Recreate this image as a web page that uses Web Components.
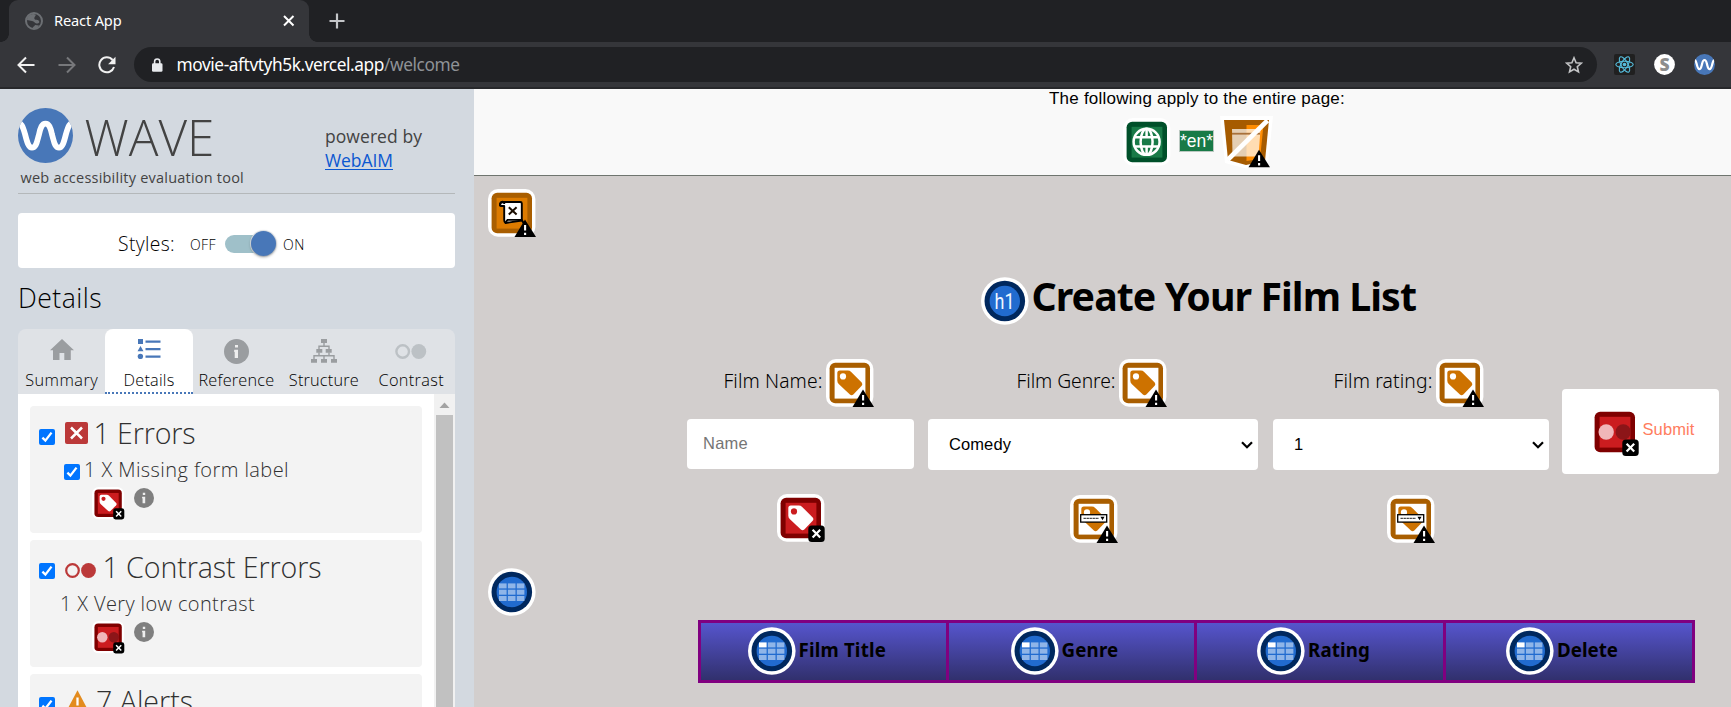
<!DOCTYPE html>
<html lang="en">
<head>
<meta charset="utf-8">
<title>React App</title>
<style>
html,body{margin:0;height:100%;overflow:hidden}
body{font-family:"Open Sans","Noto Sans",sans-serif;color:#000}
</style>
</head>
<body>
<app-window></app-window>
<script>
const define = (name, html, setup) => customElements.define(name, class extends HTMLElement {
  connectedCallback() {
    if (this.shadowRoot) return;
    const t = document.createElement('template');
    t.innerHTML = typeof html === 'function' ? html(this) : html;
    this.attachShadow({mode: 'open'}).append(t.content.cloneNode(true));
    if (setup) setup(this);
  }
});

/* A single line of text tracked out to a set width */
define('fit-text', el => `<style>
:host{display:block;flex:none;width:${el.getAttribute('w')}px;white-space:pre;font-size:${el.getAttribute('s')}px;line-height:${el.getAttribute('h') || 24}px;height:${el.getAttribute('h') || 24}px}
span{display:inline-block}
</style><span><slot></slot></span>`, el => {
  const span = el.shadowRoot.querySelector('span');
  const n = el.textContent.length;
  const d = (el.getAttribute('w') - span.getBoundingClientRect().width) / n;
  span.style.letterSpacing = d.toFixed(3) + 'px';
});

/* WAVE icons */
const alertBadge = '<path d="M37 30.5L48 48H26.5z" fill="#000"/><path d="M37.1 36v5.6M37.1 43.8v2.3" stroke="#fff" stroke-width="2.1"/>';
const xBadge = '<rect x="31.3" y="31.5" width="16.4" height="16.4" rx="3.5"/><path d="M35.6 35.8l7.6 7.8M43.2 35.8l-7.6 7.8" stroke="#fff" stroke-width="2.2"/>';
const square = (edge, fill) => `<rect width="47.4" height="47.8" rx="10" fill="#fff"/><rect x="3.6" y="3.8" width="40.4" height="40.4" rx="5.5" fill="${edge}"/><rect x="8.6" y="8.8" width="30.8" height="30.8" fill="${fill}"/>`;
const tag = (f, hole) => `<path d="M11.3 14q0-2.5 2.5-2.5h8q2 0 3.4 1.4l10.5 10.7q1.3 1.8 0 3.2l-8.4 8.7q-1.7 1.4-3.4 0L12.7 25q-1.4-1.4-1.4-3.2z" fill="${f}"/><circle cx="17" cy="17.4" r="3.1" fill="${hole}"/>`;
const round = '<circle cx="23.8" cy="24" r="23.8" fill="#fff"/><circle cx="23.8" cy="24" r="20.3" fill="#00285e"/><circle cx="23.8" cy="24" r="15.2" fill="#216bcf"/>';
const cells = first => [0,1,2].map(r => [0,1,2].map(c => `<rect x="${11+c*8.9}" y="${15.4+r*6.3}" width="7.6" height="5" fill="${first&&!r&&!c?'#fff':'#8fb5e8'}"/>`).join('')).join('');
const dots = '<circle cx="15.2" cy="24" r="7.7" fill="#f0b6b9"/><circle cx="32.2" cy="24" r="7.7" fill="#8c1518"/>';
const ART = {
  alertLabel: square('#a95e00','#fff') + tag('#cd7200','#fff') + alertBadge,
  selectLabel: square('#a95e00','#fff') + tag('#cd7200','#fff') + '<rect x="10.7" y="19.7" width="26" height="7.4" fill="#fff" stroke="#000" stroke-width="1.3"/><path d="M13.5 23.4h15.5" stroke="#444" stroke-width="1.3" stroke-dasharray="2.4 .6"/><path d="M30.5 21.7h4l-2 3.6z"/>' + alertBadge,
  errorLabel: square('#7f0000','#cb1c1f') + tag('#fff','#cb1c1f') + xBadge,
  contrast: square('#7f0000','#cb1c1f') + dots + xBadge,
  script: square('#a95e00','#dd7b00') + '<path d="M16.5 13h15.8q1.5 0 1.5 1.5V31.5L17.5 34q-1.3-1-1.3-3V17h-3.6q-1.5-4 3.9-4z" fill="#fff" stroke="#000" stroke-width="1.9" stroke-linejoin="round"/><path d="M12 17.2v-2.6q.4-1.8 2.4-1.8 1.9.2 1.9 2.2M17.5 33.5l2-2.6h14.3l3.5 6" fill="none" stroke="#000" stroke-width="1.9"/><path d="M20.8 18.2l7.8 7.4M28.6 18.2l-7.8 7.4" stroke="#1b0d00" stroke-width="2"/>' + alertBadge,
  lang: square('#00502a','#187a47') + '<g fill="none" stroke="#fff" stroke-width="2.5"><circle cx="23.6" cy="23.8" r="13"/><ellipse cx="23.6" cy="23.8" rx="6" ry="13"/><path d="M23.6 11v7.5M12 19.2h23.2M12 28.4h23.2M23.6 28.4v8"/></g>',
  h1: round + '<text x="23.6" y="31.8" text-anchor="middle" font-family="Roboto" font-weight="400" font-size="22" textLength="20" lengthAdjust="spacingAndGlyphs" fill="#eef6ff">h1</text>',
  table: round + cells(false),
  th: round + cells(true),
  style: '<path d="M0 0h53l-5 48-22 4.5L5 47z" fill="#fff"/><path d="M4 4h45l-4 41-19 4-18-5z" fill="#a65b00"/><path d="M26.500 9h17L40 43l-13.500 2z" fill="#ff8c00"/><path d="M12 13h28.500l-2 27.500H12.500z" fill="#fff" opacity=".7"/><path d="M12 17.700h28" stroke="#a8713a" stroke-width="1.800"/><path d="M47.500 4.500L7.500 44" stroke="#fff" stroke-width="4.600"/><g transform="translate(2 3.300)">' + alertBadge + '</g>'
};
define('wave-icon', el => {
  const s = el.getAttribute('size') || 48, big = el.getAttribute('kind') === 'style';
  return `<style>:host{display:block;flex:none;width:${big?53:s}px;height:${big?53:s}px}svg{display:block}</style><svg width="${big?53:s}" height="${big?53:s}" viewBox="0 0 ${big?'53 53':'48 48'}">${ART[el.getAttribute('kind')]}</svg>`;
});
define('wave-mark', el => `<style>:host{display:block;flex:none;width:${el.getAttribute('size')}px;height:${el.getAttribute('size')}px}svg{display:block}</style>
<svg width="100%" height="100%" viewBox="0 0 55 55"><defs><clipPath id="c"><circle cx="27.500" cy="27.500" r="27.500"/></clipPath></defs><circle cx="27.500" cy="27.500" r="27.500" fill="#4877b8"/><path clip-path="url(#c)" d="M-1 16C3 13 5 19 7 26C9 34 10.500 39.700 14 39.700C18.500 39.700 19 33 21 26.500C22.500 19.500 24 15.700 27.500 15.700C31 15.700 32.500 19.500 34 26.500C36 33 36.500 39.700 41 39.700C44.500 39.700 46 34 48 26C50 19 52 13 56 16" fill="none" stroke="#fff" stroke-width="5.800"/></svg>`);

define('check-box', `<style>:host{display:block;flex:none;width:16px;height:16px}svg{display:block}</style><svg width="16" height="16"><rect width="16" height="16" rx="2" fill="#0075ff"/><path d="M3.400 8.600l3 3 6.100-8" fill="none" stroke="#fff" stroke-width="2.300"/></svg>`);
define('info-dot', el => `<style>:host{display:block;flex:none}svg{display:block}</style><svg width="${el.getAttribute('size')}" height="${el.getAttribute('size')}" viewBox="0 0 25 25"><circle cx="12.500" cy="12.500" r="12.500" fill="${el.getAttribute('fill')}"/><path d="M11 6h3v2.600h-3zM10.300 10.800H14V19h-3.300v-6.300h-.8z" fill="#eee"/></svg>`);

define('browser-chrome', `<style>
:host{display:block;height:89px;background:#35363a;font-family:"Noto Sans",sans-serif;color:#fff}
svg{display:block;flex:none}
.strip{height:42px;background:#202124;display:flex}
.tab{margin-left:9px;width:300px;height:42px;background:#35363a;border-radius:9px 9px 0 0;display:flex;align-items:flex-start;position:relative}
.tab::before,.tab::after{content:"";position:absolute;bottom:0;width:8px;height:8px}
.tab::before{left:-8px;background:radial-gradient(circle at 0 0,#202124 7.500px,#35363a 8px)}
.tab::after{right:-8px;background:radial-gradient(circle at 100% 0,#202124 7.500px,#35363a 8px)}
.bar{height:45px;display:flex;align-items:center;border-bottom:2px solid #27282b}
.omni{margin-left:18px;width:1463px;height:35px;border-radius:18px;background:#202124;display:flex;align-items:center}
.dim{color:#8f9296}
.ext{display:flex;margin-left:17px;gap:20px}
</style>
<div class="strip"><div class="tab">
<svg width="18" height="18" style="margin:12px 0 0 16px"><circle cx="9" cy="9" r="8" fill="none" stroke="#6c6f73" stroke-width="2"/><path d="M2.500 5C5 1.500 9 1.500 10.500 2.500 11.500 4 8.500 5 9.500 7c1 1.500 3.500 0 4.500 2 1 2-1 2.500-2.500 2.500-2-.2-2-2-4.500-2.500L2 8zM8 16.500c-.5-2 1.500-2 2-3.500l4 .5-2 2.500z" fill="#6c6f73"/></svg>
<fit-text w="67.500" s="14.600" style="margin:8px 0 0 11px">React App</fit-text>
<svg width="12" height="12" style="margin:15px 0 0 161px"><path d="M1 1l9.500 9.500M10.500 1L1 10.500" stroke="#fff" stroke-width="2"/></svg></div>
<svg width="16" height="16" style="margin:13px 0 0 20px"><path d="M8 .5v15M.5 8h15" stroke="#c4c6c9" stroke-width="2.200"/></svg></div>
<div class="bar">
<svg width="18" height="18" style="margin-left:17px"><path d="M17.500 9H2M9 1.500L1.500 9 9 16.500" fill="none" stroke="#f1f1f1" stroke-width="2"/></svg>
<svg width="18" height="18" style="margin-left:23px"><path d="M.5 9H16M9 1.500L16.500 9 9 16.500" fill="none" stroke="#77787b" stroke-width="2"/></svg>
<svg width="18" height="18" style="margin-left:22px"><path d="M14.600 4A7.500 7.500 0 1 0 16 11" fill="none" stroke="#f1f1f1" stroke-width="2"/><path d="M17.500 .8v7.400h-7.400z" fill="#f1f1f1"/></svg>
<div class="omni">
<svg width="12" height="14" style="margin-left:17px"><rect x="1" y="5.200" width="10.500" height="8.500" rx="1.300" fill="#e8eaed"/><path d="M3.600 6V3.600a2.600 2.600 0 0 1 5.200 0V6" fill="none" stroke="#e8eaed" stroke-width="1.600"/></svg>
<fit-text w="207.500" s="17.300" style="margin-left:13.500px">movie-aftvtyh5k.vercel.app</fit-text><fit-text class="dim" w="75.500" s="17.300">/welcome</fit-text>
<svg width="18" height="18" viewBox="0 0 18 18" style="margin-left:auto;margin-right:14px"><path d="M9 1.800l2.100 4.900 5.200.5-4 3.500 1.200 5.200L9 13.200l-4.500 2.700 1.200-5.200-4-3.500 5.200-.5z" fill="none" stroke="#c2c3c5" stroke-width="1.600"/></svg>
</div>
<div class="ext">
<svg width="21" height="21"><rect width="21" height="21" rx="2" fill="#202020"/><g fill="none" stroke="#56bede" stroke-width="1.100"><ellipse cx="10.500" cy="10.500" rx="8.700" ry="3.300"/><ellipse cx="10.500" cy="10.500" rx="8.700" ry="3.300" transform="rotate(60 10.500 10.500)"/><ellipse cx="10.500" cy="10.500" rx="8.700" ry="3.300" transform="rotate(120 10.500 10.500)"/></g><circle cx="10.500" cy="10.500" r="1.800" fill="#56bede"/></svg>
<svg width="21" height="21" style="margin-left:-1px;overflow:visible"><circle cx="10.500" cy="10.500" r="10.400" fill="#fff"/><text x="10.500" y="16.700" text-anchor="middle" font-family="Open Sans" font-weight="800" font-size="17.500" fill="#8d8d8d">S</text></svg>
<wave-mark size="21" style="margin-left:-1px"></wave-mark>
</div></div>`);

const TAB_ICON = {
  home: '<path d="M12 0L0 11.200h3V21h6.500v-7h4.800v7h6.500v-9.800H24z" fill="#9a9da0"/>',
  list: '<g fill="#4877b8"><path d="M1 0h5v5H1zM3.500 7L6.500 12.300H.5z"/><circle cx="3.400" cy="17.400" r="2.700"/><path d="M8.500 1.500h15v2.300h-15zM8.500 9h15v2.300h-15zM8.500 16.400h15v2.300h-15z"/></g>',
  tree: '<g fill="#9a9da0"><path d="M10 0h6v4h-6zM5.300 10h6v3.700h-6zM14.700 10h6v3.700h-6zM0 20h6v3.700H0zM10 20h6v3.700h-6zM20 20h6v3.700h-6z"/></g><path d="M13 4v3.200M8 10V7.200h10V10M8 13.500v3.300M3 20v-3.200h10V20M18 13.500v3.300M13 16.800h10V20" fill="none" stroke="#9a9da0" stroke-width="1.400"/>',
  eyes: '<circle cx="7.700" cy="7.500" r="6.300" fill="none" stroke="#bcc1c5" stroke-width="2.400"/><circle cx="23.800" cy="7.500" r="7.400" fill="#bcc1c5"/>'
};
define('nav-tab', el => {
  const k = el.getAttribute('icon'), [w,h,m] = {home:[24,21,10],list:[24,20,10],info:[25,25,10],tree:[26,24,10],eyes:[32,15,15]}[k];
  return `<style>:host{display:flex;flex-direction:column;align-items:center;width:87.400px;height:65px;box-sizing:border-box}
:host([on]){background:#fff;border-radius:8px 8px 0 0;border-bottom:2px dotted #4877b8}
.i{height:40px;padding-top:${m}px;box-sizing:border-box}svg{display:block}</style><div class="i">${k==='info'?'<info-dot size="25" fill="#9a9da0"></info-dot>':`<svg width="${w}" height="${h}">${TAB_ICON[k]}</svg>`}</div><fit-text w="${el.getAttribute('w')}" s="16.300" h="22">${el.getAttribute('label')}</fit-text>`;
});

/* One category of results: heading, one row and its icon */
define('result-card', el => `<style>
:host{display:block;height:127px;margin-bottom:7px;border-radius:4px;background:#f3f3f3;color:#303030;box-sizing:border-box;padding-left:9px;overflow:hidden}
.head{display:flex;height:54px;align-items:flex-start}
.head check-box{margin-top:23px}
.glyph{margin:16px 0 0 10px;width:${el.getAttribute('gw')}px}
::slotted(svg){display:block}
.row{display:flex;height:27px;align-items:flex-start}
.row check-box{margin:4px 5px 0 25px}
.icons{display:flex;padding-left:53px}
</style>
<div class="head"><check-box></check-box><div class="glyph"><slot></slot></div><fit-text w="${el.getAttribute('tw')}" s="28.600" h="38" style="margin-top:8px">${el.getAttribute('title-text')}</fit-text></div>
${el.getAttribute('row') ? `<div class="row" style="${el.hasAttribute('checked')?'':'padding-left:22px'}">${el.hasAttribute('checked')?'<check-box></check-box>':''}<fit-text w="${el.getAttribute('rw')}" s="20" h="22" style="margin:-1px 0 0 -1px">${el.getAttribute('row')}</fit-text></div>
<div class="icons"><wave-icon kind="${el.getAttribute('icon')}" size="32.500"></wave-icon><info-dot size="20" fill="#7f7f7f" style="margin:1px 0 0 9.500px"></info-dot></div>` : ''}`);

define('wave-sidebar', `<style>
:host{display:block;width:474px;height:618px;background:#d3d9e0;box-sizing:border-box;padding:0 19px 0 18px;overflow:hidden;font-weight:300;color:#000}
.brand{height:104px;display:flex;border-bottom:1px solid #b4b8ba;color:#434343}
.left{width:307px}
.logo{display:flex;height:75px;padding-top:19px;box-sizing:border-box}
.pow{padding-top:35px;font-weight:400}
.pow u{color:#0b57d0;text-decoration:none;display:block;width:68px;border-bottom:1px solid #0b57d0;height:21px}
.styles{margin-top:19px;height:55px;border-radius:4px;background:#fff;display:flex;align-items:center}
.toggle{position:relative;width:40px;height:18px;border-radius:9px;background:#9fc0c9;margin:6px 0 0 9px}
.toggle i{position:absolute;left:26px;top:-4px;width:25px;height:25px;border-radius:50%;background:#4877b8;box-shadow:0 1px 3px #0006,0 0 0 1px #e8edf2}
nav{display:flex;background:#dfe2e6;border-radius:8px 8px 0 0}
.panel{display:flex;background:#fff;height:320px}
.list{width:392px;padding:12px 12px 0}
.bar{width:21px;background:#f1f1f1}
.bar svg{display:block}
.bar div{margin-left:2px;width:17px;height:300px;background:#c1c1c1}
</style>
<div class="brand"><div class="left"><div class="logo"><wave-mark size="55"></wave-mark><fit-text w="130" s="49.500" h="60" style="margin:-1px 0 0 11.500px">WAVE</fit-text></div><fit-text w="223.500" s="14.500" h="20" style="margin:4px 0 0 2.500px;font-weight:400">web accessibility evaluation tool</fit-text></div>
<div class="pow"><fit-text w="97" s="17.500">powered by</fit-text><u><fit-text w="68" s="17.500">WebAIM</fit-text></u></div></div>
<div class="styles"><fit-text w="57" s="19.300" style="margin:6px 0 0 100px">Styles:</fit-text><fit-text w="26" s="14" style="margin:9px 0 0 15px">OFF</fit-text><div class="toggle"><i></i></div><fit-text w="22" s="14" style="margin:9px 0 0 18px">ON</fit-text></div>
<fit-text w="84" s="26.600" h="36" style="margin:12px 0 13px 0">Details</fit-text>
<nav><nav-tab icon="home" label="Summary" w="73"></nav-tab><nav-tab on icon="list" label="Details" w="51"></nav-tab><nav-tab icon="info" label="Reference" w="76"></nav-tab><nav-tab icon="tree" label="Structure" w="70"></nav-tab><nav-tab icon="eyes" label="Contrast" w="65.500"></nav-tab></nav>
<div class="panel"><div class="list">
<result-card title-text="1 Errors" tw="102" gw="28.500" row="1 X Missing form label" rw="205" checked icon="errorLabel"><svg width="23" height="22"><rect width="23" height="22" rx="2" fill="#bb3939"/><path d="M6 5.500l11 11M17 5.500l-11 11" stroke="#fff" stroke-width="2.500"/></svg></result-card>
<result-card title-text="1 Contrast Errors" tw="219" gw="37.500" row="1 X Very low contrast" rw="195" icon="contrast"><svg width="31" height="15" style="margin-top:7px"><circle cx="7.500" cy="7.500" r="6.300" fill="none" stroke="#bb3939" stroke-width="2.200"/><circle cx="23.500" cy="7.500" r="7.400" fill="#bb3939"/></svg></result-card>
<result-card title-text="7 Alerts" tw="97" gw="31"><svg width="25" height="24"><path d="M12.500 .2L24 22H1z" fill="#e38b1e"/><path d="M12.500 7.500v8M12.500 17v3" stroke="#fff" stroke-width="2.300"/></svg></result-card>
</div><div class="bar"><svg width="21" height="21"><path d="M5.500 14l5-5.500 5 5.500z" fill="#a3a3a3"/></svg><div></div></div></div>`);

define('film-field', el => `<style>
:host{display:block;width:${el.getAttribute('width')}px}
.l{display:flex;height:60px;padding-left:${el.getAttribute('lp')}px;font-family:"Noto Sans",sans-serif;font-weight:350}
.box{height:${el.hasAttribute('select')?51:50}px;border-radius:4px;background:#fff;display:flex;align-items:flex-start;justify-content:space-between;box-sizing:border-box;font-family:"Liberation Sans",sans-serif;color:${el.hasAttribute('select')?'#000':'#757575'}}
</style><div class="l"><fit-text w="99" s="19.300" h="28" style="margin:8px 4px 0 0">${el.getAttribute('label')}</fit-text><wave-icon kind="alertLabel" style="margin:-.5px 0 0 -.5px"></wave-icon></div>
<div class="box"><fit-text w="${el.getAttribute('vw')}" s="16.500" h="24" style="margin:${el.hasAttribute('select')?'13px 0 0 21px':'12px 0 0 16px'}">${el.getAttribute('value')}</fit-text>${el.hasAttribute('select')?'<svg width="12" height="8" style="margin:22px 5px 0 0"><path d="M1 1.200l5 5 5-5" fill="none" stroke="#000" stroke-width="2.200"/></svg>':''}</div>
<wave-icon kind="${el.hasAttribute('select')?'selectLabel':'errorLabel'}" style="margin:24.500px 0 0 ${el.getAttribute('ip')}px"></wave-icon>`);

define('submit-button', `<style>:host{display:flex;width:157px;height:85px;margin-top:30px;background:#fff;border-radius:4px;box-sizing:border-box;padding:18.500px 0 0 29px;font-family:"Liberation Sans",sans-serif;color:#ff7d5e}</style><wave-icon kind="contrast"></wave-icon><fit-text w="52" s="16.500" style="margin:9px 0 0 3.500px">Submit</fit-text>`);

define('table-head', el => `<style>:host{display:flex;box-sizing:border-box;border-right:3px solid purple;padding:4px 0 0 ${el.getAttribute('p')}px;background:linear-gradient(#5655cd,#31306d)}:host(:last-child){border-right:0}</style><wave-icon kind="th"></wave-icon><fit-text w="${el.getAttribute('w')}" s="18.700" h="28" style="margin:9px 0 0 3px">${el.getAttribute('label')}</fit-text>`);

define('film-page', `<style>
:host{display:block;width:1257px;height:618px;background:#d2cecd;overflow:hidden}
header{height:87px;box-sizing:border-box;background:#f9f9f9;border-bottom:1px solid #6f756f;font-family:"Liberation Sans",sans-serif}
.marks{display:flex;margin-left:649px;padding-top:6px}
.en{width:35px;height:22px;box-sizing:border-box;border:1px solid #bbc9c1;background:#187a47;color:#fff;margin:15px 6px 0 8px}
.title{display:flex;font-family:"Noto Sans",sans-serif;font-weight:700;margin:40px 0 0 507px;height:82px}
form{display:flex;margin-left:213px;height:209px}
.table{display:grid;grid-template-columns:248px 248px 249px 246px;margin:4px 0 0 224px;width:997px;height:63px;box-sizing:border-box;border:3px solid purple;font-family:"Noto Sans",sans-serif;font-weight:700}
</style>
<header><fit-text w="296" s="17" h="20" style="padding-left:575px">The following apply to the entire page:</fit-text><div class="marks"><wave-icon kind="lang" style="margin-top:3px"></wave-icon><div class="en"><fit-text w="33" s="17.500" h="20">*en*</fit-text></div><wave-icon kind="style" style="margin-top:.5px"></wave-icon></div></header>
<wave-icon kind="script" style="margin:13px 0 0 14px"></wave-icon>
<div class="title"><wave-icon kind="h1"></wave-icon><fit-text w="384.500" s="39.300" h="54" style="margin:-8.500px 0 0 2.500px">Create Your Film List</fit-text></div>
<form>
<film-field width="227" lp="36.500" label="Film Name:" value="Name" vw="45" ip="90"></film-field>
<film-field select width="330" lp="88.500" label="Film Genre:" value="Comedy" vw="62" ip="142" style="margin-left:14px"></film-field>
<film-field select width="276" lp="60.500" label="Film rating:" value="1" vw="9" ip="114" style="margin-left:15px"></film-field>
<submit-button style="margin-left:13px"></submit-button>
</form>
<wave-icon kind="table" style="margin-left:14px"></wave-icon>
<div class="table"><table-head p="46.500" w="87.500" label="Film Title"></table-head><table-head p="61.500" w="57" label="Genre"></table-head><table-head p="60" w="62" label="Rating"></table-head><table-head p="60" w="61" label="Delete"></table-head></div>`);

define('app-window', `<style>:host{display:block;width:1731px;height:707px;overflow:hidden}.body{display:flex}</style><browser-chrome></browser-chrome><div class="body"><wave-sidebar></wave-sidebar><film-page></film-page></div>`);
</script>
</body>
</html>
